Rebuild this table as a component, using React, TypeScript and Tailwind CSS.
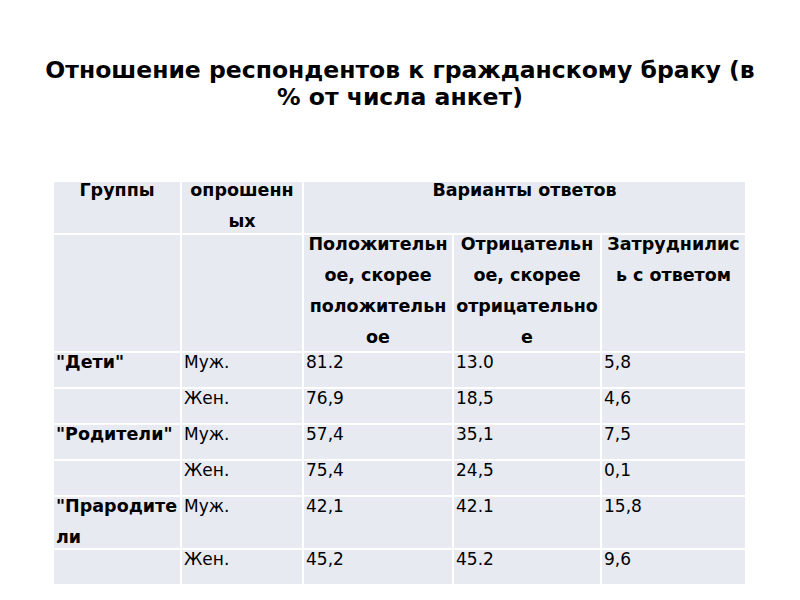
import React from 'react';

const cell = 'bg-[#e8eaf1] text-black';

type Row = { group?: string; groupLines?: string[]; sex: string; a: string; b: string; c: string };

const ROWS: Row[] = [
  { group: '"Дети"', sex: 'Муж.', a: '81.2', b: '13.0', c: '5,8' },
  { sex: 'Жен.', a: '76,9', b: '18,5', c: '4,6' },
  { group: '"Родители"', sex: 'Муж.', a: '57,4', b: '35,1', c: '7,5' },
  { sex: 'Жен.', a: '75,4', b: '24,5', c: '0,1' },
  { groupLines: ['"Прародите', 'ли'], sex: 'Муж.', a: '42,1', b: '42.1', c: '15,8' },
  { sex: 'Жен.', a: '45,2', b: '45.2', c: '9,6' },
];

function Txt({ children, className = '' }: { children: React.ReactNode; className?: string }) {
  return <div className={`leading-[31px] ${className}`}>{children}</div>;
}

export default function App() {
  return (
    <div
      className="w-[800px] h-[600px] bg-white overflow-hidden"
      style={{ fontFamily: '"DejaVu Sans", sans-serif' }}
    >
      <h1 className="pt-[57px] text-center text-[23.5px] font-bold leading-[27px] text-black">
        Отношение респондентов к гражданскому браку (в
        <br />
        % от числа анкет)
      </h1>

      <div
        className="mt-[71px] ml-[54px] grid w-[691px] gap-[2px] text-[17px]"
        style={{
          gridTemplateColumns: '126px 120px 148px 146px 143px',
          gridTemplateRows: '51px 116px 34px 34px 34px 34px 51px 34px',
        }}
      >
        <div className={`${cell} font-bold text-[17.5px] text-center`}>
          <Txt className="-mt-[7px]">Группы</Txt>
        </div>
        <div className={`${cell} font-bold text-[17.5px] text-center`}>
          <Txt className="-mt-[7px]">опрошенн<br />ых</Txt>
        </div>
        <div className={`${cell} col-span-3 font-bold text-[17.5px] text-center`}>
          <Txt className="-mt-[7px]">Варианты ответов</Txt>
        </div>

        <div className={cell} />
        <div className={cell} />
        <div className={`${cell} font-bold text-[17.5px] text-center`}>
          <Txt className="-mt-[6px]">Положительн<br />ое, скорее<br />положительн<br />ое</Txt>
        </div>
        <div className={`${cell} font-bold text-[17.5px] text-center`}>
          <Txt className="-mt-[6px]">Отрицательн<br />ое, скорее<br />отрицательно<br />е</Txt>
        </div>
        <div className={`${cell} font-bold text-[17.5px] text-center`}>
          <Txt className="-mt-[6px]">Затруднилис<br />ь с ответом</Txt>
        </div>

        {ROWS.map((r, i) => (
          <React.Fragment key={i}>
            <div className={`${cell} font-bold text-[17.5px] pl-[2px]`}>
              <Txt className="-mt-[6px]">
                {r.groupLines ? (
                  <>
                    {r.groupLines[0]}
                    <br />
                    {r.groupLines[1]}
                  </>
                ) : (
                  r.group ?? ''
                )}
              </Txt>
            </div>
            <div className={`${cell} pl-[2px]`}>
              <Txt className="-mt-[6px]">{r.sex}</Txt>
            </div>
            <div className={`${cell} pl-[2px]`}>
              <Txt className="-mt-[6px]">{r.a}</Txt>
            </div>
            <div className={`${cell} pl-[2px]`}>
              <Txt className="-mt-[6px]">{r.b}</Txt>
            </div>
            <div className={`${cell} pl-[2px]`}>
              <Txt className="-mt-[6px]">{r.c}</Txt>
            </div>
          </React.Fragment>
        ))}
      </div>
    </div>
  );
}
